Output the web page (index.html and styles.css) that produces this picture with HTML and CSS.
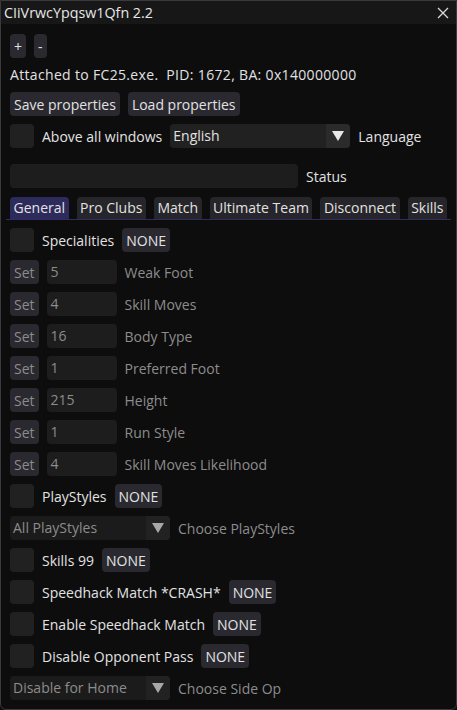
FILE: index.html
```html
<!DOCTYPE html>
<html lang="en">
<head>
    <meta charset="UTF-8">
    <title>CIiVrwcYpqsw1Qfn 2.2</title>
    <link rel="stylesheet" href="styles.css">
</head>
<body>
    <div class="window">
        <div class="titlebar">
            <span class="title">CIiVrwcYpqsw1Qfn 2.2</span>
            <svg class="close" width="12" height="12" viewBox="0 0 12 12">
                <path d="M1 1 L11 11 M11 1 L1 11" stroke="#d8d8d8" stroke-width="1.3"/>
            </svg>
        </div>

        <div class="content">
            <div class="row">
                <button class="btn">+</button>
                <button class="btn">-</button>
            </div>

            <div class="text-row">Attached to FC25.exe.&nbsp; PID: 1672, BA: 0x140000000</div>

            <div class="row">
                <button class="btn">Save properties</button>
                <button class="btn">Load properties</button>
            </div>

            <div class="row">
                <span class="check"></span>
                <span>Above all windows</span>
                <div class="combo combo-lang">
                    <span class="combo-value">English</span>
                    <span class="combo-arrow"><svg width="12" height="10" viewBox="0 0 12 10"><polygon points="0,0 12,0 6,10"/></svg></span>
                </div>
                <span>Language</span>
            </div>

            <div class="row status-row">
                <span class="input input-status"></span>
                <span>Status</span>
            </div>

            <div class="tabbar">
                <span class="tab active">General</span>
                <span class="tab">Pro Clubs</span>
                <span class="tab">Match</span>
                <span class="tab">Ultimate Team</span>
                <span class="tab">Disconnect</span>
                <span class="tab">Skills</span>
            </div>

            <div class="row">
                <span class="check"></span>
                <span>Specialities</span>
                <button class="btn">NONE</button>
            </div>

            <div id="set-rows"></div>

            <div class="row">
                <span class="check"></span>
                <span>PlayStyles</span>
                <button class="btn">NONE</button>
            </div>

            <div class="row">
                <div class="combo combo-small disabled">
                    <span class="combo-value">All PlayStyles</span>
                    <span class="combo-arrow"><svg width="12" height="10" viewBox="0 0 12 10"><polygon points="0,0 12,0 6,10"/></svg></span>
                </div>
                <span class="muted">Choose PlayStyles</span>
            </div>

            <div class="row">
                <span class="check"></span>
                <span>Skills 99</span>
                <button class="btn">NONE</button>
            </div>

            <div class="row">
                <span class="check"></span>
                <span>Speedhack Match *CRASH*</span>
                <button class="btn">NONE</button>
            </div>

            <div class="row">
                <span class="check"></span>
                <span>Enable Speedhack Match</span>
                <button class="btn">NONE</button>
            </div>

            <div class="row">
                <span class="check"></span>
                <span>Disable Opponent Pass</span>
                <button class="btn">NONE</button>
            </div>

            <div class="row">
                <div class="combo combo-small disabled">
                    <span class="combo-value">Disable for Home</span>
                    <span class="combo-arrow"><svg width="12" height="10" viewBox="0 0 12 10"><polygon points="0,0 12,0 6,10"/></svg></span>
                </div>
                <span class="muted">Choose Side Op</span>
            </div>
        </div>
    </div>

    <script>
        const props = [
            ['5', 'Weak Foot'],
            ['4', 'Skill Moves'],
            ['16', 'Body Type'],
            ['1', 'Preferred Foot'],
            ['215', 'Height'],
            ['1', 'Run Style'],
            ['4', 'Skill Moves Likelihood']
        ];
        const setRows = document.getElementById('set-rows');
        props.forEach(([value, label]) => {
            const row = document.createElement('div');
            row.className = 'row';
            row.innerHTML = `
                <button class="btn muted">Set</button>
                <span class="input input-prop muted">${value}</span>
                <span class="muted">${label}</span>
            `;
            setRows.appendChild(row);
        });
    </script>
</body>
</html>
```

FILE: styles.css
```css
html, body {
    margin: 0;
    padding: 0;
    background: #0d0d0d;
}
body {
    font-family: "Open Sans", "Noto Sans", sans-serif;
    font-size: 14px;
    color: #e2e2e2;
}
.window {
    width: 457px;
    height: 710px;
    box-sizing: border-box;
    border: 1px solid #3a3a3c;
    border-radius: 0 0 6px 6px;
    background: #0d0d0e;
    overflow: hidden;
}
.titlebar {
    height: 23px;
    background: #171717;
    display: flex;
    align-items: center;
    justify-content: space-between;
    padding: 0 7px 0 3px;
}
.title {
    color: #e6e6e6;
    font-size: 14.3px;
}
.content {
    padding: 10px 9px 0 9px;
    display: flex;
    flex-direction: column;
    gap: 8px;
}
#set-rows {
    display: flex;
    flex-direction: column;
    gap: 8px;
}
.row {
    display: flex;
    align-items: center;
    gap: 8px;
    height: 24px;
    white-space: nowrap;
}
.text-row {
    height: 18px;
    line-height: 18px;
    white-space: nowrap;
    letter-spacing: 0.33px;
}
.btn {
    font: inherit;
    color: #e2e2e2;
    background: #2a2930;
    border: none;
    border-radius: 4px;
    height: 24px;
    padding: 0 4px;
    margin: 0;
}
.muted {
    color: #8c8c8c;
}
.btn.muted {
    color: #8c8c8c;
}
.check {
    width: 24px;
    height: 24px;
    border-radius: 4px;
    background: #212121;
    flex: none;
}
.input {
    height: 24px;
    line-height: 24px;
    border-radius: 4px;
    background: #1d1d1d;
    padding: 0 4px;
    box-sizing: border-box;
    flex: none;
}
.input-status {
    width: 288px;
}
.status-row {
    margin-top: 8px;
}
.input-prop {
    width: 70px;
}
.combo {
    display: flex;
    height: 24px;
    border-radius: 4px;
    background: #212121;
    overflow: hidden;
    flex: none;
}
.combo-value {
    flex: 1;
    padding: 0 3px;
    line-height: 24px;
}
.combo-arrow {
    width: 24px;
    background: #2b2b2b;
    display: flex;
    align-items: center;
    justify-content: center;
    fill: #e8e8e8;
}
.combo-lang {
    width: 180px;
}
.combo-small {
    width: 160px;
}
.combo.disabled {
    background: #1b1b1b;
}
.combo.disabled .combo-value {
    color: #8c8c8c;
}
.combo.disabled .combo-arrow {
    background: #222222;
    fill: #a8a8a8;
}
.tabbar {
    display: flex;
    gap: 8px;
    height: 22px;
    margin-top: 1px;
    margin-left: -4px;
    margin-right: -4px;
    padding-left: 4px;
    border-bottom: 1px solid #2e2b66;
}
.tab {
    height: 22px;
    line-height: 22px;
    padding: 0 3.5px;
    background: #262529;
    border-radius: 4px 4px 0 0;
    white-space: nowrap;
}
.tab.active {
    background: #2d2a5c;
}
```
